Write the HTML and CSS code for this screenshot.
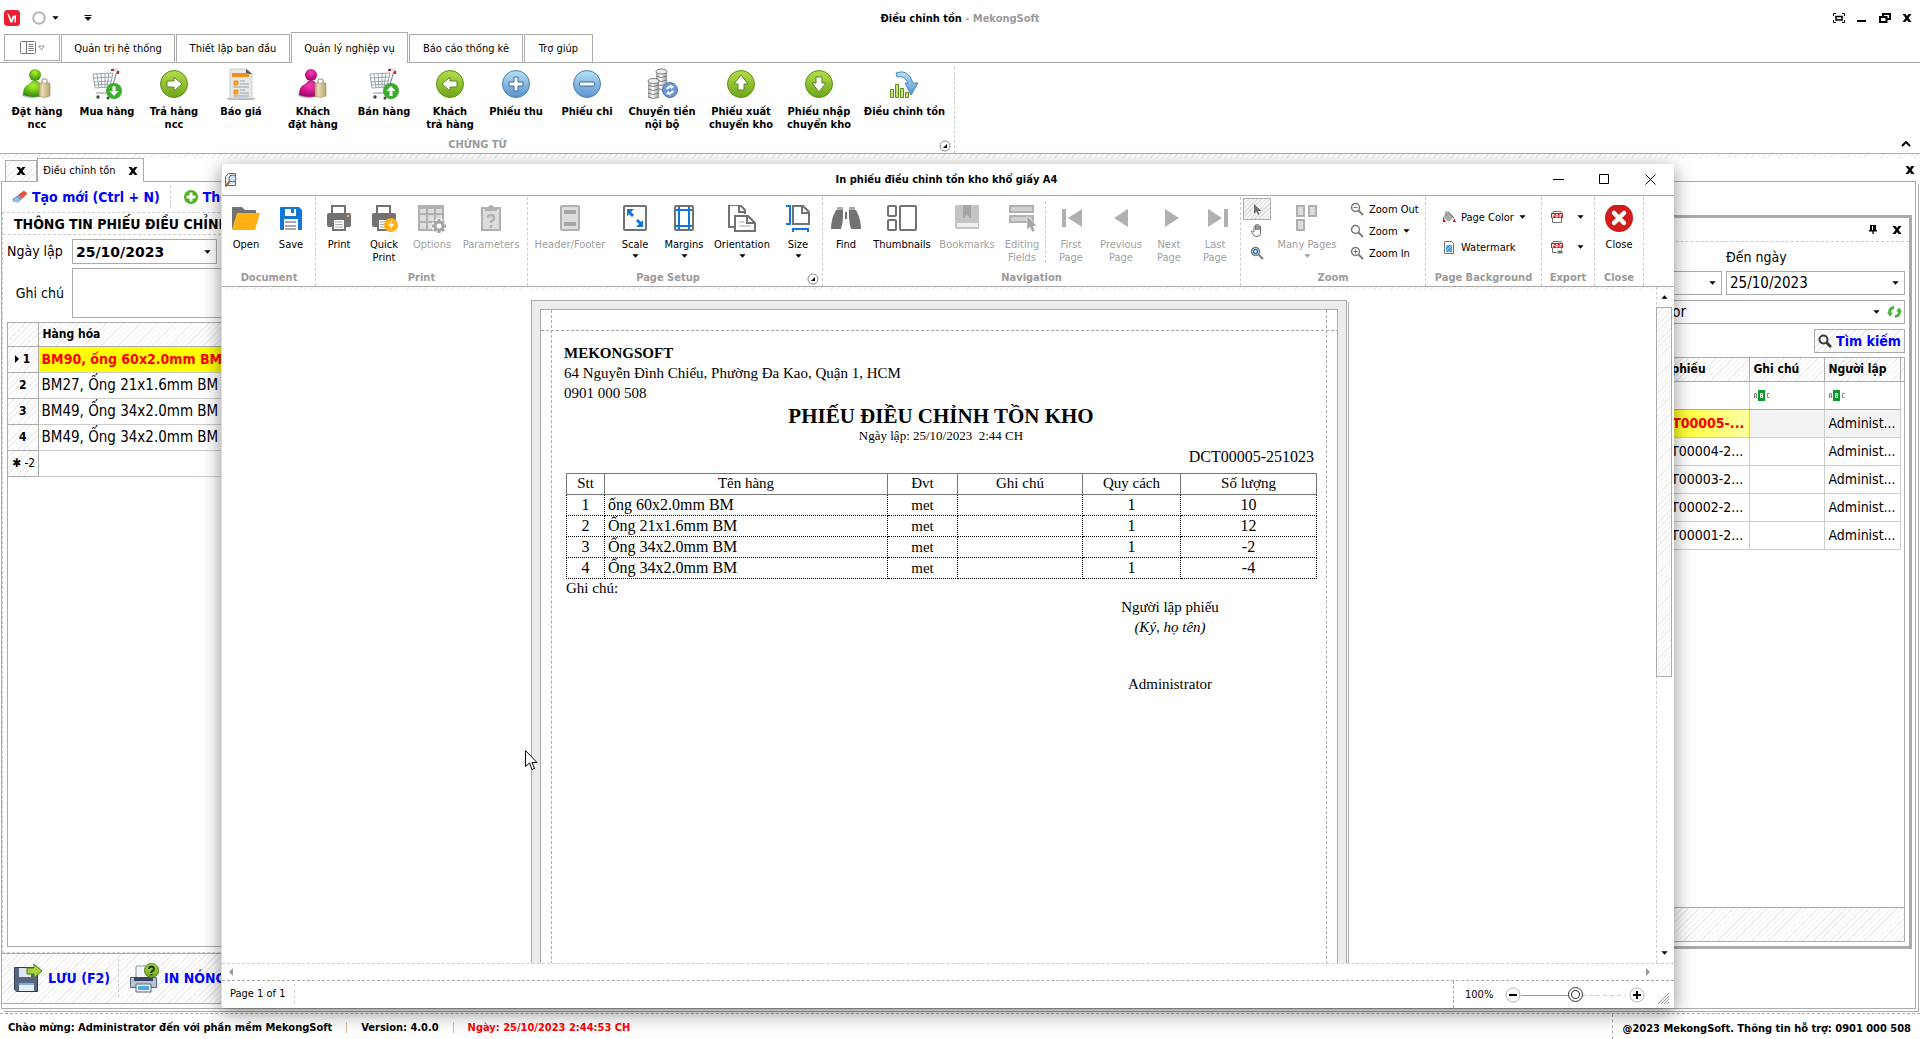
FILE: index.html
```html
<!DOCTYPE html>
<html lang="vi">
<head>
    <meta charset="utf-8" />
    <title>Điều chỉnh tồn - MekongSoft</title>
    <link rel="stylesheet" href="styles.css">
</head>
<body>
    <!-- icon dùng chung -->
    <svg class="defs" width="0" height="0">
        <defs>
            <linearGradient id="gGreen" x1="0" y1="0" x2="0" y2="1"><stop offset="0" stop-color="#b4dc4a"/><stop offset="1" stop-color="#6fa51c"/></linearGradient>
            <linearGradient id="gBlue" x1="0" y1="0" x2="0" y2="1"><stop offset="0" stop-color="#b5e2f2"/><stop offset="1" stop-color="#5a93cf"/></linearGradient>
            <radialGradient id="gMan" cx="0.5" cy="0.3" r="0.7"><stop offset="0" stop-color="#b2f52c"/><stop offset="1" stop-color="#2c8a08"/></radialGradient>
            <radialGradient id="gPink" cx="0.5" cy="0.3" r="0.7"><stop offset="0" stop-color="#f83bb8"/><stop offset="1" stop-color="#a00064"/></radialGradient>
            <linearGradient id="gBag" x1="0" y1="0" x2="1" y2="0"><stop offset="0" stop-color="#b8a578"/><stop offset="0.3" stop-color="#e8dcb4"/><stop offset="1" stop-color="#b6a26e"/></linearGradient>
            <linearGradient id="gCoin" x1="0" y1="0" x2="1" y2="0"><stop offset="0" stop-color="#a2a2a2"/><stop offset="0.4" stop-color="#fff"/><stop offset="1" stop-color="#999"/></linearGradient>
            <symbol id="x" viewBox="0 0 10 10"><path d="M0.500 1h3L5 3l1.500-2h3L6.500 5l3 4h-3L5 7 3.500 9h-3l3-4z"/></symbol>
            <symbol id="down" viewBox="0 0 8 4"><path d="M0.500 0h7L4 4z"/></symbol>
            <symbol id="launcher" viewBox="0 0 12 12"><circle cx="6" cy="6" r="5" fill="#fff" stroke="#8c8c8c"/><path d="M8 4v4H4z" fill="#000"/></symbol>
            <symbol id="bag" viewBox="0 0 12 20"><path d="M3.500 6V2.500Q3.500 1 5 1h2Q8.500 1 8.500 2.500V6" fill="none" stroke="#8c8064"/><path d="M0.500 5h11v13l-5 1.500-6-1z" fill="url(#gBag)" stroke="#a08e60" stroke-width="0.600"/></symbol>
            <symbol id="cart" viewBox="0 0 32 32"><path d="M2 6l20-1-3 14-15 1zM3 10l18-1M3 14l17-1M4 17l15-1M6 6l2 14M10 6l1 14M14 5v14M18 5l-2 14" fill="none" stroke="#9aa5ae"/><path d="M26 3l-5 17-1 5H5" fill="none" stroke="#8a949c" stroke-width="1.200"/><path d="M21 1l5 1 3 3" fill="none" stroke="#ddd" stroke-width="3"/><path d="M20 1h3v2h-3zM26 3h2v3h-2z" fill="#c22"/><circle cx="7" cy="29" r="1.700" fill="#444"/><circle cx="17" cy="30" r="1.500" fill="#444"/></symbol>
            <symbol id="mag" viewBox="0 0 14 14"><circle cx="5.500" cy="5.500" r="4" fill="#fff" stroke="#777" stroke-width="1.400"/><path d="M8.500 8.500l4.500 4.500" stroke="#777" stroke-width="1.800"/></symbol>
            <symbol id="pdf" viewBox="0 0 14 14"><path d="M3 4V1.500h8V4M2.500 8v4.500h9V8" fill="none" stroke="#727272"/><path d="M1 3h12v5H1z" fill="#d11c1c"/><path d="M2.500 7.500v-3h1.500v1.500H2.500M6 4.500v2.500h1.500l.5-1-.5-1.500zM10 7.500v-3h2M10 6h1.500" fill="none" stroke="#fff" stroke-width="0.900"/></symbol>
            <symbol id="abc" viewBox="0 0 16 11"><path d="M0.500 8V3.500h2V8M0.500 6h2M15.500 3.500h-2v4h2" fill="none" stroke="#888"/><path d="M4 0h7v11H4z" fill="#0a9a28"/><path d="M6.500 3.500h2v4h-2zM6.500 5.500h2" fill="none" stroke="#fff"/></symbol>
            <symbol id="hatchmag" viewBox="0 0 14 14"><circle cx="5.500" cy="5.500" r="4" fill="none" stroke="#3a3a3a" stroke-width="2"/><path d="M8.500 8.500l4.500 4.500" stroke="#3a3a3a" stroke-width="3"/></symbol>
        </defs>
    </svg>

    <!-- thanh tiêu đề -->
    <header class="titlebar">
        <svg class="logo" width="16" height="16" viewBox="0 0 16 16"><rect width="16" height="16" rx="3.500" fill="#ed1c2e"/><path d="M3 3l2 1.500 2.500 5L8.500 6l4-1-.5 1.500v6h-1.500V7.500l-.5.500-1.500 4.500H6.500z" fill="#fff"/></svg>
        <svg width="14" height="14" viewBox="0 0 14 14"><circle cx="7" cy="7" r="5.800" fill="none" stroke="#b5b5b5" stroke-width="2"/></svg>
        <svg class="qa-down" width="7" height="4"><use href="#down"/></svg>
        <svg class="qa-more" width="8" height="6" viewBox="0 0 8 6"><path d="M0.500 0h7v1h-7zM0.500 2h7L4 6z"/></svg>
        <h1 class="caption"><b>Điều chỉnh tồn</b> <span>- MekongSoft</span></h1>
        <div class="sysbuttons">
            <button aria-label="Toàn màn hình"><svg width="12" height="10" viewBox="0 0 12 10"><path d="M0.500 3V0.500h2.500M9 0.500h2.500V3M11.500 7v2.500H9M3 9.500H0.500V7" fill="none" stroke="#000"/><path d="M3 3.500h6v3.500H3z" fill="none" stroke="#000" stroke-width="1.600"/></svg></button>
            <button aria-label="Thu nhỏ"><svg width="12" height="10" viewBox="0 0 12 10"><path d="M1 7h9v2H1z"/></svg></button>
            <button aria-label="Khôi phục"><svg width="12" height="10" viewBox="0 0 12 10"><path d="M4 3.500V1h7v5H8.500M1 4h6.500v5H1z" fill="none" stroke="#000" stroke-width="2"/></svg></button>
            <button aria-label="Đóng"><svg width="10" height="10"><use href="#x"/></svg></button>
        </div>
    </header>

    <!-- menu chính -->
    <nav class="tabs">
        <button class="tab app" aria-label="Menu"><svg width="25" height="13" viewBox="0 0 25 13"><rect x="0.500" y="0.500" width="15" height="12" rx="1" fill="none" stroke="#777"/><path d="M6.500 1v11M8.500 3.500h5M8.500 5.500h5M8.500 7.500h5M8.500 9.500h5" stroke="#777" fill="none"/><path d="M18.500 5h6l-3 4z" fill="none" stroke="#999"/></svg></button>
        <button class="tab t1">Quản trị hệ thống</button>
        <button class="tab t1">Thiết lập ban đầu</button>
        <button class="tab t2 active">Quản lý nghiệp vụ</button>
        <button class="tab t1">Báo cáo thống kê</button>
        <button class="tab t3">Trợ giúp</button>
    </nav>

    <section class="ribbon">
        <div class="group main-group">
            <div class="items">
                <button><svg width="32" height="32" viewBox="0 0 32 32"><ellipse cx="11" cy="27" rx="10" ry="3" fill="#bbb"/><circle cx="14" cy="7" r="6" fill="url(#gMan)"/><path d="M2 27q0-9 6-11l3-3h6l3 3q4 3 3 11-10 4-21 0z" fill="url(#gMan)"/><use href="#bag" x="17" y="10" width="13" height="20"/></svg>Đặt hàng<br>ncc</button>
                <button><svg width="32" height="32"><use href="#cart" width="32" height="32"/><circle cx="23" cy="23" r="8" fill="#3dab2b"/><path d="M21.500 18h3v5h3L23 28l-4.500-5h3z" fill="#fff"/></svg>Mua hàng</button>
                <button><svg width="32" height="32" viewBox="0 0 32 32"><circle cx="16" cy="16" r="13.500" fill="url(#gGreen)" stroke="#5d9014"/><path d="M9 13h7V9l8 7-8 7v-4H9z" fill="#fff" stroke="#5d8520"/></svg>Trả hàng<br>ncc</button>
                <button><svg width="32" height="32" viewBox="0 0 32 32"><path d="M1 30h30l-3 2H4z" fill="#bbb"/><path d="M5 1h17l5 5v24H5z" fill="#e8e8e8" stroke="#ccc"/><path d="M21 1v5h6z" fill="#555"/><path d="M7 5h17v4H7z" fill="#f0901c"/><path d="M9 13h4v4H9zM9 22h4v4H9z" fill="#ffa020" stroke="#f0901c"/><path d="M15 13h5M15 16h9M8 19h16M15 22h5M15 25h9M8 28h16" stroke="#8fa0b0"/></svg>Báo giá</button>
                <button><svg width="32" height="32" viewBox="0 0 32 32"><ellipse cx="11" cy="27" rx="10" ry="3" fill="#bbb"/><circle cx="14" cy="7" r="6" fill="url(#gPink)"/><path d="M2 27q0-9 6-11l3-3h6l3 3q4 3 3 11-10 4-21 0z" fill="url(#gPink)"/><use href="#bag" x="17" y="10" width="13" height="20"/></svg>Khách<br>đặt hàng</button>
                <button><svg width="32" height="32"><use href="#cart" width="32" height="32"/><circle cx="23" cy="23" r="8" fill="#3dab2b"/><path d="M21.500 28h3v-5h3L23 18l-4.500 5h3z" fill="#fff"/></svg>Bán hàng</button>
                <button><svg width="32" height="32" viewBox="0 0 32 32"><circle cx="16" cy="16" r="13.500" fill="url(#gGreen)" stroke="#5d9014"/><path d="M23 13h-7V9l-8 7 8 7v-4h7z" fill="#fff" stroke="#5d8520"/></svg>Khách<br>trả hàng</button>
                <button><svg width="32" height="32" viewBox="0 0 32 32"><circle cx="16" cy="16" r="13.500" fill="url(#gBlue)" stroke="#4a7fb8"/><path d="M14 9h4v5h5v4h-5v5h-4v-5H9v-4h5z" fill="#fff" stroke="#3a68a8"/></svg>Phiếu thu</button>
                <button><svg width="32" height="32" viewBox="0 0 32 32"><circle cx="16" cy="16" r="13.500" fill="url(#gBlue)" stroke="#4a7fb8"/><rect x="8.500" y="14" width="15" height="4" rx="1" fill="#fff" stroke="#3a68a8"/></svg>Phiếu chi</button>
                <button><svg width="32" height="32" viewBox="0 0 32 32"><path d="M10 4v20h11V4z" fill="url(#gCoin)"/><path d="M10 8q5 3 11 0M10 12q5 3 11 0M10 16q5 3 11 0M10 20q5 3 11 0" fill="none" stroke="#777"/><ellipse cx="15.500" cy="3.500" rx="5.500" ry="2.500" fill="#eee" stroke="#777"/><path d="M2 13v16q5 4 11 0V13z" fill="url(#gCoin)"/><path d="M2 17q5 3 11 0M2 21q5 3 11 0M2 25q5 3 11 0M2 29q5 3 11 0" fill="none" stroke="#777"/><ellipse cx="7.500" cy="13" rx="5.500" ry="2.500" fill="#eee" stroke="#777"/><circle cx="24" cy="22" r="7.500" fill="#6f97d8" stroke="#4a70b8"/><path d="M20 21q1-3 4-3l-1-1.500 5 2-3 3v-2q-2 0-3 2zM28 23q-1 3-4 3l1 1.500-5-2 3-3v2q2 0 3-2z" fill="#fff"/></svg>Chuyển tiền<br>nội bộ</button>
                <button><svg width="32" height="32" viewBox="0 0 32 32"><circle cx="16" cy="16" r="13.500" fill="url(#gGreen)" stroke="#5d9014"/><path d="M13 22v-6H9l7-9 7 9h-4v6z" fill="#fff" stroke="#5d8520"/></svg>Phiếu xuất<br>chuyển kho</button>
                <button><svg width="32" height="32" viewBox="0 0 32 32"><circle cx="16" cy="16" r="13.500" fill="url(#gGreen)" stroke="#5d9014"/><path d="M13 9v6H9l7 9 7-9h-4V9z" fill="#fff" stroke="#5d8520"/></svg>Phiếu nhập<br>chuyển kho</button>
                <button><svg width="32" height="32" viewBox="0 0 32 32"><path d="M7 5q12-5 17 10h5l-7 12-6-12h3Q16 7 8 9z" fill="url(#gBlue)" stroke="#4a88b8"/><path d="M1.500 29.500v-8h3v8zM6.500 29.500v-13h3v13zM11.500 29.500v-9h3v9zM16.500 29.500v-5h3v5z" fill="#c6e07c" stroke="#5d9014"/></svg>Điều chỉnh tồn</button>
            </div>
            <div class="group-name">CHỨNG TỪ</div>
            <button class="launcher" aria-label="Thêm"><svg width="12" height="12"><use href="#launcher"/></svg></button>
        </div>
        <button class="collapse" aria-label="Thu gọn"><svg width="10" height="6" viewBox="0 0 10 6"><path d="M1 5l4-4 4 4" fill="none" stroke="#000" stroke-width="2"/></svg></button>
    </section>

    <main class="desktop">
        <div class="doc-tabs">
            <button class="doc-tab small" aria-label="Đóng"><svg width="10" height="10"><use href="#x"/></svg></button>
            <button class="doc-tab active">Điều chỉnh tồn<svg width="10" height="10"><use href="#x"/></svg></button>
            <button class="doc-close" aria-label="Đóng"><svg width="10" height="10"><use href="#x"/></svg></button>
        </div>

        <div class="doc">
            <section class="edit">
                <div class="toolbar">
                    <button><svg width="16" height="14" viewBox="0 0 16 14"><path d="M6 5l6-4.500 3.500 3L10 9z" fill="#e8553a"/><path d="M6 5l4 4-4 3.500-5-1L0.500 9z" fill="#6a9bd0"/><path d="M4 7l4 3-2 2.500-5-1z" fill="#9cc0e8"/></svg>Tạo mới (Ctrl + N)</button>
                    <button><svg width="16" height="16" viewBox="0 0 16 16"><circle cx="8" cy="8" r="7" fill="#4fae1e"/><path d="M6.500 3.500h3v3h3v3h-3v3h-3v-3h-3v-3h3z" fill="#fff"/></svg>Thêm hàng hóa</button>
                </div>
                <div class="edit-body">
                    <h2>THÔNG TIN PHIẾU ĐIỀU CHỈNH TỒN</h2>
                    <div class="form">
                        <label for="ngay">Ngày lập</label>
                        <div class="combo date"><input id="ngay" type="text" value="25/10/2023"><svg width="7" height="4"><use href="#down"/></svg></div>
                        <label for="ghichu">Ghi chú</label>
                        <textarea id="ghichu"></textarea>
                    </div>
                    <div class="grid-box">
                        <table class="goods">
                            <tr><th class="no"></th><th class="name">Hàng hóa</th></tr>
                            <tr class="sel"><th><svg width="4" height="8" viewBox="0 0 4 8"><path d="M0 0l4 4-4 4z"/></svg> 1</th><td>BM90, ống 60x2.0mm BM</td></tr>
                            <tr><th>2</th><td>BM27, Ống 21x1.6mm BM</td></tr>
                            <tr><th>3</th><td>BM49, Ống 34x2.0mm BM</td></tr>
                            <tr><th>4</th><td>BM49, Ống 34x2.0mm BM</td></tr>
                            <tr><th class="new">✱ -2</th><td></td></tr>
                        </table>
                    </div>
                </div>
                <div class="actions">
                    <button><svg width="30" height="30" viewBox="0 0 30 30"><path d="M1.500 4.500h22l1 1v23h-21l-2-2z" fill="#56667f" stroke="#2d3a52"/><path d="M6 5h12v9H6z" fill="#dfe6f0"/><path d="M6 20h15v8H6z" fill="#e6eef8"/><path d="M6 20h15v2H6z" fill="#7fb0e8"/><path d="M14 5h7V1l8 7-8 7v-4h-7z" fill="#a4d43c" stroke="#4c7a10"/></svg>LƯU (F2)</button>
                    <button><svg width="30" height="30" viewBox="0 0 30 30"><path d="M7 3h14v12H7z" fill="#f2f5fa" stroke="#8a97aa"/><path d="M1.500 14.500h26v10h-26z" fill="#b9c4d6" stroke="#56637a"/><path d="M5 14h19v4H5z" fill="#39445a"/><path d="M7 21h15v8H7z" fill="#eaf4ff" stroke="#56637a"/><path d="M9 23h11v4H9z" fill="#5aa4e0"/><circle cx="22.500" cy="7.500" r="7" fill="url(#gGreen)" stroke="#4c7a10"/><path d="M20 6q0-2.500 2.500-2.500T25 6q0 1.500-2.500 2.500V10M22.500 11v1.500" fill="none" stroke="#1d3600" stroke-width="1.800"/></svg>IN NÓNG (F3)</button>
                </div>
            </section>

            <aside class="dock">
                <div class="dock-head">
                    <button aria-label="Ghim"><svg width="8" height="9" viewBox="0 0 8 9"><path d="M1 0h6v5h1v1.500H4.700V9H3.400V6.500H0V5h1zM3 1v4h1V1z"/></svg></button>
                    <button aria-label="Đóng"><svg width="10" height="10"><use href="#x"/></svg></button>
                </div>
                <div class="dock-body">
                    <div class="range">
                        <div><label for="tu">Từ ngày</label><div class="combo"><input id="tu" type="text" value="01/10/2023"><svg width="7" height="4"><use href="#down"/></svg></div></div>
                        <div><label for="den">Đến ngày</label><div class="combo"><input id="den" type="text" value="25/10/2023"><svg width="7" height="4"><use href="#down"/></svg></div></div>
                    </div>
                    <div class="combo user">
                        <select aria-label="Người lập"><option>Administrator</option></select>
                        <svg width="7" height="4"><use href="#down"/></svg>
                        <svg class="refresh" width="15" height="14" viewBox="0 0 15 14"><path d="M2.500 8.500Q2 3 7 2.500M12.500 5.500Q13 11 8 11.500" fill="none" stroke="#46b43c" stroke-width="2.800"/><path d="M0 7.500h6l-3 4zM15 6.500H9l3-4z" fill="#46b43c"/></svg>
                    </div>
                    <button class="search"><svg width="14" height="14"><use href="#hatchmag"/></svg>Tìm kiếm</button>
                    <div class="list-box">
                        <table class="list">
                            <tr class="head"><th>Ngày lập</th><th class="so">Số phiếu</th><th class="gc">Ghi chú</th><th class="nl">Người lập</th><th class="pad"></th></tr>
                            <tr class="filter"><td></td><td></td><td><svg width="16" height="11"><use href="#abc"/></svg></td><td><svg width="16" height="11"><use href="#abc"/></svg></td></tr>
                            <tr class="sel"><td>25/10/2023</td><td>DCT00005-...</td><td></td><td>Administ...</td></tr>
                            <tr><td>25/10/2023</td><td>DCT00004-2...</td><td></td><td>Administ...</td></tr>
                            <tr><td>25/10/2023</td><td>DCT00003-2...</td><td></td><td>Administ...</td></tr>
                            <tr><td>25/10/2023</td><td>DCT00002-2...</td><td></td><td>Administ...</td></tr>
                            <tr><td>25/10/2023</td><td>DCT00001-2...</td><td></td><td>Administ...</td></tr>
                        </table>
                        <div class="list-foot"></div>
                    </div>
                </div>
            </aside>
        </div>
    </main>

    <footer class="statusbar">
        <span>Chào mừng: Administrator đến với phần mềm MekongSoft</span>
        <i></i>
        <span>Version: 4.0.0</span>
        <i></i>
        <span class="red">Ngày: 25/10/2023 2:44:53 CH</span>
        <span class="copy">@2023 MekongSoft. Thông tin hỗ trợ: 0901 000 508</span>
    </footer>

    <!-- cửa sổ xem trước khi in -->
    <div class="preview" role="dialog" aria-label="In phiếu điều chỉnh tồn kho khổ giấy A4">
        <div class="preview-title">
            <svg width="14" height="16" viewBox="0 0 14 16"><path d="M1.500 4.500l3-3h7v12h-10z" fill="#e8f0fc" stroke="#4068a8"/><circle cx="8.500" cy="6.500" r="3.500" fill="#cfe4f8" stroke="#5a6a80"/><path d="M6 9l-4.500 5.500" stroke="#a86a28" stroke-width="2"/></svg>
            <h2>In phiếu điều chỉnh tồn kho khổ giấy A4</h2>
            <div class="win-buttons">
                <button aria-label="Minimize"><svg width="11" height="11"><path d="M0 5.500h11" stroke="#000"/></svg></button>
                <button aria-label="Maximize"><svg width="11" height="11"><path d="M0.500 0.500h9v9h-9z" fill="none" stroke="#000"/></svg></button>
                <button aria-label="Close"><svg width="11" height="11"><path d="M0.500 0.500l10 10M10.500 0.500l-10 10" stroke="#000"/></svg></button>
            </div>
        </div>

        <div class="ribbon preview-ribbon">
            <div class="group g-doc">
                <div class="items">
                    <button><svg width="28" height="28" viewBox="0 0 28 28"><path d="M0 25V3q0-1 1-1h9l3 3h10q1 0 1 1v4H5z" fill="#727272"/><path d="M5 8h23l-5 17H0z" fill="#ffb115"/></svg>Open</button>
                    <button><svg width="28" height="28" viewBox="0 0 28 28"><path d="M3 3q0-1 1-1h18l3 3v19q0 1-1 1h-3V14H7v11H4q-1 0-1-1zM8 4v7h11V4h-2v4h-3V4z" fill="#1177d7"/><path d="M8 16h11v2H8zM8 20h11v2H8zM8 23h11v2H8z" fill="#aaa"/></svg>Save</button>
                </div>
                <div class="group-name">Document</div>
            </div>
            <div class="group g-print">
                <div class="items">
                    <button><svg width="28" height="28" viewBox="0 0 28 28"><path d="M7 8V1h13v7" fill="none" stroke="#727272" stroke-width="2"/><path d="M4 8h20q2 0 2 2v10q0 2-2 2h-3v-8H7v8H4q-2 0-2-2V10q0-2 2-2z" fill="#727272"/><path d="M22 10h2v2h-2z" fill="#ffb115"/><path d="M8 14h12v11H8z" fill="#fff" stroke="#727272" stroke-width="2"/><path d="M10 17h8M10 19.500h8M10 22h8" stroke="#aaa"/></svg>Print</button>
                    <button><svg width="28" height="28" viewBox="0 0 28 28"><path d="M7 8V1h13v7" fill="none" stroke="#727272" stroke-width="2"/><path d="M4 8h20q2 0 2 2v10q0 2-2 2h-3v-8H7v8H4q-2 0-2-2V10q0-2 2-2z" fill="#727272"/><path d="M8 14h12v11H8z" fill="#fff" stroke="#727272" stroke-width="2"/><path d="M10 17h6M10 19.500h6M10 22h6" stroke="#aaa"/><circle cx="21" cy="20" r="7" fill="#ffb115"/><path d="M22 15l-4 6h3l-1 4 4-6h-3z" fill="#fff"/></svg>Quick<br>Print</button>
                    <button disabled><svg width="28" height="28" viewBox="0 0 28 28"><path d="M1 1h24v24H1zM1 9h24M1 17h24M9 1v24M17 1v24" fill="#ddd" stroke="#b0b0b0" stroke-width="2"/><path d="M1 2h24" stroke="#b0b0b0" stroke-width="4"/><circle cx="21" cy="21" r="7.500" fill="#fff"/><circle cx="21" cy="21" r="4" fill="none" stroke="#a5a5a5" stroke-width="3"/><path d="M21 14v3M21 25v3M14 21h3M25 21h3M16 16l2 2M24 24l2 2M26 16l-2 2M18 24l-2 2" stroke="#a5a5a5" stroke-width="3"/></svg>Options</button>
                    <button disabled><svg width="28" height="28" viewBox="0 0 28 28"><path d="M5 3h18v22H5z" fill="#ddd" stroke="#b0b0b0" stroke-width="2"/><path d="M8 6V2h3q3-4 6 0h3v4z" fill="#b0b0b0"/><path d="M11 13q0-3 3-3t3 3q0 2-3 3.500V18M14 20v3" fill="none" stroke="#b0b0b0" stroke-width="2.400"/></svg>Parameters</button>
                </div>
                <div class="group-name">Print</div>
            </div>
            <div class="group g-setup">
                <div class="items">
                    <button disabled><svg width="28" height="28" viewBox="0 0 28 28"><rect x="5" y="1" width="18" height="24" rx="1" fill="#ddd" stroke="#b0b0b0" stroke-width="2"/><path d="M8 5h12v4H8zM8 17h12v4H8z" fill="#a5a5a5"/></svg>Header/Footer</button>
                    <button><svg width="28" height="28" viewBox="0 0 28 28"><rect x="3" y="1" width="22" height="24" rx="1" fill="#fff" stroke="#727272" stroke-width="2"/><path d="M8 7l4 4M16 15l4 4" stroke="#1177d7" stroke-width="3"/><path d="M6 4h7l-7 7zM22 22h-7l7-7z" fill="#1177d7"/></svg>Scale<svg class="arr" width="7" height="4"><use href="#down"/></svg></button>
                    <button><svg width="28" height="28" viewBox="0 0 28 28"><rect x="5" y="1" width="18" height="24" rx="1" fill="#fff" stroke="#727272" stroke-width="2"/><path d="M9 2v22M19 2v22M6 5h16M6 21h16" stroke="#1177d7" stroke-width="2"/></svg>Margins<svg class="arr" width="7" height="4"><use href="#down"/></svg></button>
                    <button><svg width="28" height="28" viewBox="0 0 28 28"><path d="M7 22H1V0h11l5 5v4M11 0v7h6" fill="none" stroke="#727272" stroke-width="2"/><path d="M7 11h13l7 7v8H7z" fill="#fff" stroke="#727272" stroke-width="2"/><path d="M19 11v7h8" fill="none" stroke="#727272" stroke-width="2"/><path d="M11 17h5M11 21h12" stroke="#aaa"/></svg>Orientation<svg class="arr" width="7" height="4"><use href="#down"/></svg></button>
                    <button><svg width="28" height="28" viewBox="0 0 28 28"><path d="M9 1h10l6 6v12H9zM18 1v7h7" fill="none" stroke="#727272" stroke-width="2"/><path d="M2 1h4v18H2M9 27v-3h15v3" fill="none" stroke="#1177d7" stroke-width="2"/></svg>Size<svg class="arr" width="7" height="4"><use href="#down"/></svg></button>
                </div>
                <div class="group-name">Page Setup</div>
                <button class="launcher" aria-label="Page Setup"><svg width="12" height="12"><use href="#launcher"/></svg></button>
            </div>
            <div class="group g-nav">
                <div class="items">
                    <button><svg width="30" height="28" viewBox="0 0 30 28"><path d="M6 2h6v3H6zM18 2h6v3h-6z" fill="#aaa"/><path d="M5 5h7v7q0 6-2 12H0q0-10 5-19zM25 5h-7v7q0 6 2 12h10q0-10-5-19zM14 7h2v7h-2z" fill="#727272"/></svg>Find</button>
                    <button><svg width="30" height="28" viewBox="0 0 30 28"><rect x="1" y="1" width="8" height="10" rx="1" fill="none" stroke="#727272" stroke-width="2"/><rect x="1" y="15" width="8" height="10" rx="1" fill="none" stroke="#727272" stroke-width="2"/><rect x="13" y="1" width="16" height="24" rx="1" fill="none" stroke="#727272" stroke-width="2"/></svg>Thumbnails</button>
                    <button disabled><svg width="28" height="28" viewBox="0 0 28 28"><path d="M4 0h22v24H4q-2 0-2-2V2q0-2 2-2z" fill="#c4c4c4"/><path d="M10 0h8v14l-4-4-4 4z" fill="#a5a5a5"/><path d="M4 18h21v4H4z" fill="#eee"/></svg>Bookmarks</button>
                    <button disabled><svg width="28" height="28" viewBox="0 0 28 28"><path d="M2 1h23v6H2zM2 11h23v6H2z" fill="#d0d0d0" stroke="#b0b0b0" stroke-width="2"/><path d="M19 11v14l3-3 2 5 3-1-2-5h4z" fill="#a5a5a5" stroke="#fff" stroke-width="0.500"/></svg>Editing<br>Fields</button>
                    <i class="short-sep"></i>
                    <button disabled><svg width="28" height="28" viewBox="0 0 28 28"><path d="M5 4h4v18H5zM25 4v18L11 13z" fill="#b0b0b0"/></svg>First<br>Page</button>
                    <button disabled><svg width="28" height="28" viewBox="0 0 28 28"><path d="M21 4v18L7 13z" fill="#b0b0b0"/></svg>Previous<br>Page</button>
                    <button disabled><svg width="28" height="28" viewBox="0 0 28 28"><path d="M10 4v18l14-9z" fill="#b0b0b0"/></svg>Next<br>Page</button>
                    <button disabled><svg width="28" height="28" viewBox="0 0 28 28"><path d="M7 4v18l14-9zM23 4h4v18h-4z" fill="#b0b0b0"/></svg>Last<br>Page</button>
                </div>
                <div class="group-name">Navigation</div>
            </div>
            <div class="group g-zoom">
                <div class="items">
                    <div class="stack tools">
                        <button class="pressed" aria-label="Pointer"><svg width="14" height="14" viewBox="0 0 14 14"><path d="M4 2v10l2.500-2.500L8 13l1.500-.7L8 9h3.500z" fill="#727272"/></svg></button>
                        <button aria-label="Hand Tool"><svg width="14" height="14" viewBox="0 0 14 14"><path d="M4 8V3q1-1.500 1.500 0v3-5Q6.500 0 7 1v5-5q1.200-1 2 0v5-4q1.500-.5 1.500 1v6q0 3.500-3.500 3.500T3 10L1 7.500Q2 6 3.500 8z" fill="#fff" stroke="#727272"/></svg></button>
                        <button aria-label="Magnifier"><svg width="14" height="14" viewBox="0 0 14 14"><use href="#mag" width="14" height="14"/><circle cx="5.500" cy="5.500" r="2" fill="none" stroke="#1177d7" stroke-width="1.500"/></svg></button>
                    </div>
                    <button disabled><svg width="28" height="28" viewBox="0 0 28 28"><path d="M4 1h7v10H4zM16 1h7v10h-7zM4 15h7v10H4z" fill="#ddd" stroke="#b0b0b0" stroke-width="2"/></svg>Many Pages<svg class="arr" width="7" height="4"><use href="#down"/></svg></button>
                    <div class="stack">
                        <button><svg width="14" height="14" viewBox="0 0 14 14"><use href="#mag" width="14" height="14"/><path d="M3.500 5.500h4" stroke="#727272"/></svg>Zoom Out</button>
                        <button><svg width="14" height="14"><use href="#mag"/></svg>Zoom<svg class="side" width="7" height="4"><use href="#down"/></svg></button>
                        <button><svg width="14" height="14" viewBox="0 0 14 14"><use href="#mag" width="14" height="14"/><path d="M3.500 5.500h4M5.500 3.500v4" stroke="#727272"/></svg>Zoom In</button>
                    </div>
                </div>
                <div class="group-name">Zoom</div>
            </div>
            <div class="group g-bg">
                <div class="items">
                    <div class="stack two">
                        <button><svg width="14" height="14" viewBox="0 0 14 14"><path d="M6 1l6 6-5 5-6-5z" fill="#aaa"/><path d="M4 1v5M6 2l6 6" stroke="#727272"/><path d="M1 7v5h3zM12 8l2 4h-3z" fill="#d11c1c"/></svg>Page Color<svg class="side" width="7" height="4"><use href="#down"/></svg></button>
                        <button><svg width="14" height="14" viewBox="0 0 14 14"><path d="M2.500 1.500h7l2 2v10h-9z" fill="#fff" stroke="#727272"/><path d="M4 5h6v7H4z" fill="#7fb5e8"/><path d="M4 9l4-4M5 12l5-5M8 12l2-2" stroke="#1177d7"/></svg>Watermark</button>
                    </div>
                </div>
                <div class="group-name">Page Background</div>
            </div>
            <div class="group g-export">
                <div class="items">
                    <div class="stack two">
                        <button aria-label="Export PDF"><svg width="14" height="14"><use href="#pdf"/></svg><svg class="side" width="7" height="4"><use href="#down"/></svg></button>
                        <button aria-label="Send PDF"><svg width="14" height="14" viewBox="0 0 14 14"><use href="#pdf" width="14" height="14"/><path d="M7 10h6v4H7z" fill="#727272" stroke="#fff"/></svg><svg class="side" width="7" height="4"><use href="#down"/></svg></button>
                    </div>
                </div>
                <div class="group-name">Export</div>
            </div>
            <div class="group g-close">
                <div class="items">
                    <button><svg width="28" height="28" viewBox="0 0 28 28"><circle cx="14" cy="13" r="14" fill="#d11c1c"/><path d="M9 8l10 10M19 8L9 18" stroke="#fff" stroke-width="4.500" stroke-linecap="round"/></svg>Close</button>
                </div>
                <div class="group-name">Close</div>
            </div>
        </div>

        <div class="workspace">
            <div class="canvas">
                <div class="sheet-frame">
                    <article class="sheet">
                        <div class="report">
                            <p><b>MEKONGSOFT</b></p>
                            <p>64 Nguyễn Đình Chiểu, Phường Đa Kao, Quận 1, HCM</p>
                            <p>0901 000 508</p>
                            <h3>PHIẾU ĐIỀU CHỈNH TỒN KHO</h3>
                            <p class="created">Ngày lập: 25/10/2023&nbsp; 2:44 CH</p>
                            <p class="code">DCT00005-251023</p>
                            <table class="lines">
                                <thead>
                                    <tr><th class="c1">Stt</th><th class="c2">Tên hàng</th><th class="c3">Đvt</th><th class="c4">Ghi chú</th><th class="c5">Quy cách</th><th>Số lượng</th></tr>
                                </thead>
                                <tbody>
                                    <tr><td>1</td><td class="item">ống 60x2.0mm BM</td><td class="unit">met</td><td></td><td>1</td><td>10</td></tr>
                                    <tr><td>2</td><td class="item">Ống 21x1.6mm BM</td><td class="unit">met</td><td></td><td>1</td><td>12</td></tr>
                                    <tr><td>3</td><td class="item">Ống 34x2.0mm BM</td><td class="unit">met</td><td></td><td>1</td><td>-2</td></tr>
                                    <tr><td>4</td><td class="item">Ống 34x2.0mm BM</td><td class="unit">met</td><td></td><td>1</td><td>-4</td></tr>
                                </tbody>
                            </table>
                            <p class="note">Ghi chú:</p>
                            <div class="sign">
                                <p>Người lập phiếu</p>
                                <p><em>(Ký, họ tên)</em></p>
                                <p class="who">Administrator</p>
                            </div>
                        </div>
                    </article>
                </div>
            </div>
            <div class="vscroll">
                <svg class="up" width="7" height="4"><use href="#down"/></svg>
                <div class="thumb"></div>
                <svg width="7" height="4"><use href="#down"/></svg>
            </div>
        </div>
        <div class="hscroll">
            <svg width="4" height="8" viewBox="0 0 4 8"><path d="M4 0v8L0 4z"/></svg>
            <svg width="4" height="8" viewBox="0 0 4 8"><path d="M0 0v8l4-4z"/></svg>
        </div>
        <div class="preview-status">
            <span class="pages">Page 1 of 1</span>
            <div class="zoomer">
                <label for="zoom">100%</label>
                <button aria-label="Zoom Out"><svg width="16" height="16" viewBox="0 0 16 16"><circle cx="8" cy="8" r="7" fill="none" stroke="#b5b5b5"/><path d="M4 8h8" stroke="#000" stroke-width="2"/></svg></button>
                <input id="zoom" type="range" min="0" max="200" value="100">
                <button aria-label="Zoom In"><svg width="16" height="16" viewBox="0 0 16 16"><circle cx="8" cy="8" r="7" fill="none" stroke="#b5b5b5"/><path d="M4 8h8M8 4v8" stroke="#000" stroke-width="2"/></svg></button>
                <svg class="grip" width="11" height="11"><path d="M0 11L11 0M3 11l8-8M6 11l5-5M9 11l2-2" stroke="#999"/></svg>
            </div>
        </div>
    </div>

    <svg class="cursor" width="13" height="21" viewBox="0 0 13 21"><path d="M0.500 0.500v16l4-3.500 2.500 6.500 2.500-1-2.500-6H12z" fill="#fff" stroke="#000"/></svg>
</body>
</html>
```

FILE: styles.css
```css
:root {
    --ui: Tahoma, "DejaVu Sans Condensed", "Noto Sans", sans-serif;
    --hatch: repeating-linear-gradient(135deg, #ececec 0 1px, #fff 1px 4px);
    --line: #ababab;
}
* {
    box-sizing: border-box;
}
body {
    margin: 0;
    height: 100vh;
    min-height: 700px;
    display: flex;
    flex-direction: column;
    position: relative;
    overflow: hidden;
    background: #fff;
    color: #000;
    font: 11px/13px var(--ui);
}
button, input, select, textarea {
    font: inherit;
    color: inherit;
    background: none;
    border: 0;
    padding: 0;
    margin: 0;
}
h1, h2, h3, p {
    margin: 0;
    font-size: inherit;
    font-weight: normal;
}
svg {
    display: block;
    flex: none;
}
table {
    border-collapse: collapse;
    table-layout: fixed;
}
.defs {
    position: absolute;
}

/* title bar */
.titlebar {
    display: flex;
    align-items: center;
    height: 32px;
    padding: 4px 8px 0 4px;
    position: relative;
}
.logo {
    margin-right: 12px;
}
.qa-down {
    margin: 0 25px 0 6px;
}
.caption {
    position: absolute;
    left: 0;
    right: 0;
    text-align: center;
    font-weight: bold;
}
.caption span {
    color: #9a9a9a;
}
.sysbuttons {
    margin-left: auto;
    display: flex;
    gap: 11px;
}

/* main tabs */
.tabs {
    display: flex;
    align-items: flex-end;
    gap: 1px;
    height: 31px;
    padding-left: 4px;
    border-bottom: 1px solid var(--line);
}
.tab {
    height: 28px;
    border: 1px solid var(--line);
    border-bottom: 0;
    white-space: nowrap;
}
.tab.app {
    width: 56px;
    height: 27px;
    margin-bottom: 1px;
    border-bottom: 1px solid var(--line);
    display: flex;
    align-items: center;
    justify-content: center;
}
.t1 {
    width: 114px;
}
.t2 {
    width: 117px;
}
.t3 {
    width: 69px;
}
.tab.active {
    height: 31px;
    margin-bottom: -1px;
    background: #fff;
}

/* ribbon */
.ribbon {
    display: flex;
    height: 91px;
    border-bottom: 1px solid var(--line);
    position: relative;
}
.group {
    display: flex;
    flex-direction: column;
    border-right: 1px dashed #ccc;
    position: relative;
}
.items {
    flex: 1;
    display: grid;
}
.items button {
    display: flex;
    flex-direction: column;
    align-items: center;
    white-space: nowrap;
}
.group-name {
    height: 18px;
    text-align: center;
    font-weight: bold;
    color: #9a9a9a;
}
.launcher {
    position: absolute;
    right: 3px;
    bottom: 1px;
}
.main-group {
    padding-left: 1px;
    margin-top: 4px;
    font-weight: bold;
}
.main-group .items {
    grid-template-columns: 72px 68px 66px 68px 76px 66px 66px 66px 76px 74px 84px 72px 99px;
}
.main-group .items svg {
    margin: 1px 0 5px;
}
.main-group .group-name {
    height: 15px;
}
.collapse {
    position: absolute;
    right: 9px;
    bottom: 6px;
}

/* desktop */
.desktop {
    flex: 1;
    min-height: 0;
    display: flex;
    flex-direction: column;
    padding: 4px 4px 4px 1px;
    background: var(--hatch) top / 100% 4px no-repeat;
}
.doc-tabs {
    display: flex;
    align-items: flex-end;
    height: 23px;
    padding-left: 4px;
}
.doc-tab {
    display: flex;
    align-items: center;
    justify-content: center;
    gap: 12px;
    width: 107px;
    height: 23px;
    border: 1px solid var(--line);
    border-bottom: 0;
    white-space: nowrap;
}
.doc-tab.small {
    width: 32px;
    height: 21px;
    background: var(--hatch);
}
.doc-tab.active {
    height: 24px;
    margin-bottom: -1px;
    background: #fff;
    position: relative;
}
.doc-close {
    margin: 0 1px 6px auto;
}
.doc {
    flex: 1;
    min-height: 0;
    display: flex;
    border: 1px solid var(--line);
    box-shadow: 2px 2px 0 #fff, 3px 3px 0 var(--line);
}
.edit {
    flex: 1;
    display: flex;
    flex-direction: column;
}
.toolbar {
    display: flex;
    align-items: center;
    height: 30px;
    padding-left: 10px;
}
.toolbar button {
    display: flex;
    align-items: center;
    gap: 4px;
    height: 22px;
    padding-right: 10px;
    margin-right: 12px;
    border-right: 1px dashed #ccc;
    font: bold 14px/18px var(--ui);
    color: #00f;
    white-space: nowrap;
}
.edit-body {
    flex: 1;
    display: flex;
    flex-direction: column;
    border: 1px dashed #ccc;
    border-right: 0;
    padding: 0 4px 5px;
    font-size: 14px;
}
.edit-body h2 {
    height: 22px;
    margin: 0 -4px 4px;
    padding-left: 11px;
    border-bottom: 1px dashed #ccc;
    font: bold 14px/22px var(--ui);
    white-space: nowrap;
}
.form {
    display: grid;
    grid-template-columns: 61px 1fr;
    gap: 4px;
    align-items: center;
    margin-bottom: 4px;
}
.form label {
    text-align: right;
    padding-right: 4px;
    white-space: nowrap;
}
.form label[for=ngay] {
    padding-right: 8px;
}
.form textarea {
    height: 50px;
    border: 1px solid var(--line);
    resize: none;
}
.combo {
    display: flex;
    align-items: center;
    height: 24px;
    padding: 0 5px 0 3px;
    border: 1px solid var(--line);
    font-size: 15px;
}
.combo input, .combo select {
    flex: 1;
    min-width: 0;
    appearance: none;
    outline: 0;
}
.combo.date {
    width: 145px;
    height: 25px;
    font: bold 14px/18px Tahoma, "DejaVu Sans", sans-serif;
}
.grid-box {
    flex: 1;
    border: 1px solid var(--line);
    border-right: 0;
}
.goods {
    width: 100%;
}
.goods tr {
    height: 26px;
}
.goods tr:first-child {
    height: 23px;
}
.goods th {
    border: 1px solid var(--line);
    border-width: 0 1px 1px 0;
    padding: 0 4px;
    font-size: 12px;
    background: var(--hatch);
    white-space: nowrap;
}
.goods .no {
    width: 30px;
}
.goods .name {
    text-align: left;
}
.goods .new {
    text-align: right;
    font-weight: normal;
}
.goods th svg {
    display: inline-block;
}
.goods td {
    border-bottom: 1px solid #ccc;
    padding: 0 3px;
    font-size: 15px;
    white-space: nowrap;
}
.goods .sel td {
    background: #ff0;
    color: #f00;
    font-size: 14px;
    font-weight: bold;
}
.actions {
    display: flex;
    align-items: center;
    height: 55px;
    padding: 0 11px 6px;
    border-top: 1px solid var(--line);
    background: linear-gradient(#fff, #fff) bottom / 100% 4px no-repeat, linear-gradient(#ababab, #ababab) 0 49px / 100% 1px no-repeat, var(--hatch);
}
.actions button {
    display: flex;
    align-items: center;
    gap: 5px;
    height: 38px;
    padding-right: 8px;
    margin-right: 10px;
    border-right: 1px dashed #ccc;
    font: bold 14px/18px var(--ui);
    color: #00f;
    white-space: nowrap;
}

/* search dock */
.dock {
    width: 470px;
    margin: 33px 3px 59px 0;
    border: 3px solid var(--line);
    display: flex;
    flex-direction: column;
    font-size: 14px;
}
.dock-head {
    display: flex;
    align-items: center;
    justify-content: flex-end;
    gap: 15px;
    height: 24px;
    padding-right: 7px;
    border-bottom: 1px dashed #ccc;
}
.dock-body {
    flex: 1;
    min-height: 0;
    display: flex;
    flex-direction: column;
    padding: 6px 4px 4px;
}
.range {
    display: grid;
    grid-template-columns: 1fr 179px;
    gap: 4px;
    margin-bottom: 5px;
}
.range label {
    display: block;
    height: 23px;
    line-height: 18px;
}
.combo.user {
    gap: 7px;
    padding-right: 2px;
}
.combo.user select {
    padding-left: 141px;
}
.search {
    display: flex;
    align-items: center;
    justify-content: center;
    gap: 4px;
    align-self: flex-end;
    width: 91px;
    height: 24px;
    margin: 5px 0 4px;
    border: 1px solid var(--line);
    background: var(--hatch);
    font-weight: bold;
    color: #00f;
    white-space: nowrap;
}
.list-box {
    flex: 1;
    display: flex;
    flex-direction: column;
    justify-content: space-between;
    border: 1px solid var(--line);
}
.list {
    width: 100%;
}
.list tr {
    height: 28px;
}
.list .head {
    height: 23px;
    background: var(--hatch);
}
.list th {
    border: 1px solid var(--line);
    border-width: 0 1px 1px 0;
    padding: 0 4px;
    text-align: left;
    font-size: 12px;
    white-space: nowrap;
}
.list .so {
    width: 101px;
}
.list .gc {
    width: 75px;
}
.list .nl {
    width: 76px;
}
.list .pad {
    width: 4px;
    padding: 0;
    border-right: 0;
}
.list td {
    border: 1px solid #ccc;
    border-width: 0 1px 1px 0;
    padding: 0 4px;
    overflow: hidden;
    white-space: nowrap;
}
.list .filter td {
    border-bottom-color: var(--line);
}
.list .sel td {
    background: #f3f3f3;
}
.list .sel td:nth-child(2) {
    background: linear-gradient(90deg, #ff0, #ffffa8);
    color: #f00;
    font-weight: bold;
}
.list-foot {
    height: 34px;
    border-top: 1px solid var(--line);
    background: var(--hatch);
}

/* status bar */
.statusbar {
    display: flex;
    align-items: center;
    height: 26px;
    padding: 2px 0 0 8px;
    border-top: 1px dashed var(--line);
    font-weight: bold;
    white-space: nowrap;
}
.statusbar i {
    width: 1px;
    height: 11px;
    margin: 0 14px;
    background: #d8b8a0;
}
.statusbar .red {
    color: #f00;
}
.statusbar .copy {
    margin: -2px 0 0 auto;
    align-self: stretch;
    padding: 8px 9px 0 10px;
    border-left: 1px dashed var(--line);
}

/* preview window */
.preview {
    position: absolute;
    left: 221px;
    right: 246px;
    top: 164px;
    bottom: 31px;
    display: flex;
    flex-direction: column;
    background: #fff;
    border-left: 1px solid #ddd;
    box-shadow: 0 5px 18px rgba(0, 0, 0, 0.45);
}
.preview-title {
    display: flex;
    align-items: center;
    height: 32px;
    padding-left: 2px;
    border-bottom: 1px solid var(--line);
}
.preview-title h2 {
    flex: 1;
    padding-left: 102px;
    text-align: center;
    font: bold 11px/16px var(--ui);
}
.win-buttons {
    display: flex;
    gap: 35px;
    padding-right: 18px;
}
.preview-ribbon .group {
    padding-top: 8px;
    margin-top: 1px;
}
.preview-ribbon .group-name {
    height: 15px;
}
.preview-ribbon .items svg {
    margin-bottom: 5px;
}
.preview-ribbon .items .arr {
    margin: 3px 0 0;
}
.preview-ribbon button:disabled {
    color: #a0a0a0;
    fill: #a0a0a0;
}
.g-doc {
    width: 94px;
    padding-left: 1px;
}
.g-doc .items {
    grid-template-columns: 46px 44px;
}
.g-print {
    width: 212px;
}
.g-print .items {
    grid-template-columns: 46px 44px 52px 66px;
}
.g-setup {
    width: 295px;
}
.g-setup .items {
    grid-template-columns: 84px 46px 52px 64px 48px;
}
.g-setup .group-name {
    padding-right: 14px;
}
.g-nav {
    width: 418px;
}
.g-nav .items {
    grid-template-columns: 46px 66px 64px 46px 1px 50px 50px 46px 46px;
}
.short-sep {
    border-right: 1px dashed #ccc;
    height: 62px;
    margin-top: -4px;
}
.g-zoom {
    width: 185px;
}
.g-zoom .items {
    grid-template-columns: 30px 70px 82px;
    column-gap: 1px;
}
.g-bg {
    width: 116px;
}
.g-export {
    width: 53px;
}
.g-close {
    width: 49px;
}
.stack {
    display: flex;
    flex-direction: column;
    margin-top: -7px;
    padding-left: 7px;
}
.preview-ribbon .stack button {
    flex-direction: row;
    height: 22px;
    gap: 5px;
}
.preview-ribbon .stack svg {
    margin: 0;
}
.preview-ribbon .stack.tools {
    padding-left: 2px;
}
.preview-ribbon .tools button {
    width: 28px;
    justify-content: center;
    border: 1px solid transparent;
}
.preview-ribbon .tools .pressed {
    border-color: var(--line);
    background: repeating-linear-gradient(135deg, #dedede 0 1px, #f6f6f6 1px 3px);
}
.preview-ribbon .stack.two {
    margin-top: 1px;
    padding-left: 16px;
    gap: 8px;
}
.preview-ribbon .g-export .stack.two {
    padding-left: 8px;
}
.preview-ribbon .g-export .stack .side {
    margin-left: 8px;
}

/* paper area */
.workspace {
    flex: 1;
    min-height: 0;
    display: flex;
    background: var(--hatch) top / 100% 3px no-repeat;
}
.canvas {
    flex: 1;
    display: flex;
    justify-content: center;
    padding-top: 13px;
    overflow: hidden;
}
.sheet-frame {
    width: 816px;
    height: 1140px;
    padding: 8px;
    border: 1px solid var(--line);
    background: #ececec;
    box-shadow: 1px 1px 0 #fff, 2px 2px 0 var(--line);
}
.sheet {
    height: 1122px;
    border: 1px solid var(--line);
    padding: 20px 10px;
    background: linear-gradient(90deg, #aaa 60%, #fff 0) 0 20px / 5px 1px repeat-x, #fff;
}
.report {
    height: 1120px;
    margin-top: -20px;
    padding: 33px 8px 0 12px;
    border: 1px dashed #aaa;
    border-width: 0 1px;
    font: 15px/20px "Liberation Serif", "Times New Roman", serif;
}
.report h3 {
    margin-top: 1px;
    font-size: 21px;
    font-weight: bold;
    line-height: 24px;
    text-align: center;
}
.report .created {
    font-size: 13px;
    line-height: 16px;
    text-align: center;
}
.report .code {
    padding-right: 4px;
    font-size: 16px;
    line-height: 26px;
    text-align: right;
}
.lines {
    width: 751px;
    margin: 3px 0 0 2px;
}
.lines tr {
    height: 21px;
}
.lines th {
    border: 1px solid #777;
    padding: 0;
    font-weight: normal;
    line-height: 18px;
    vertical-align: top;
}
.lines td {
    border: 1px dotted #000;
    padding: 0;
    font-size: 16px;
    line-height: 20px;
    text-align: center;
}
.lines .item {
    padding-left: 3px;
    text-align: left;
}
.lines .unit {
    font-size: 15px;
}
.c1 { width: 38px; }
.c2 { width: 283px; }
.c3 { width: 70px; }
.c4 { width: 125px; }
.c5 { width: 98px; }
.report .note {
    padding-left: 2px;
    line-height: 18px;
}
.sign {
    width: 296px;
    margin-left: auto;
    text-align: center;
}
.sign .who {
    margin-top: 37px;
}
.vscroll {
    display: flex;
    flex-direction: column;
    align-items: center;
    width: 18px;
    padding: 8px 2px 8px 0;
    border-left: 1px dashed #ccc;
}
.vscroll .up {
    transform: rotate(180deg);
}
.thumb {
    width: 16px;
    height: 56%;
    margin: 8px 0 auto -1px;
    border: 1px solid var(--line);
    background: var(--hatch);
}
.hscroll {
    display: flex;
    align-items: center;
    justify-content: space-between;
    height: 17px;
    padding: 0 24px 0 7px;
    border-top: 1px dashed #ccc;
    fill: #999;
}
.preview-status {
    display: flex;
    align-items: stretch;
    justify-content: space-between;
    height: 28px;
    border-top: 1px dashed var(--line);
    line-height: 27px;
}
.pages {
    height: 20px;
    margin-top: 3px;
    padding: 0 9px 0 8px;
    border-right: 1px dashed #ccc;
    line-height: 20px;
}
.zoomer {
    display: flex;
    align-items: center;
    width: 221px;
    padding-left: 11px;
    border-left: 1px dashed var(--line);
}
.zoomer label {
    width: 40px;
}
.zoomer input {
    appearance: none;
    width: 108px;
    height: 16px;
    background: linear-gradient(#999, #999) 0 8px / 50% 1px no-repeat, repeating-linear-gradient(90deg, #ccc 0 4px, #fff 4px 7px) 54px 8px / 50px 1px no-repeat;
}
.zoomer input::-webkit-slider-thumb {
    appearance: none;
    width: 15px;
    height: 15px;
    border: 1px solid #333;
    border-radius: 50%;
    background: radial-gradient(circle, #fff 0 3px, #444 4px, #fff 5px);
}
.grip {
    margin: 8px 0 0 13px;
}
.cursor {
    position: absolute;
    left: 525px;
    top: 750px;
}
```
